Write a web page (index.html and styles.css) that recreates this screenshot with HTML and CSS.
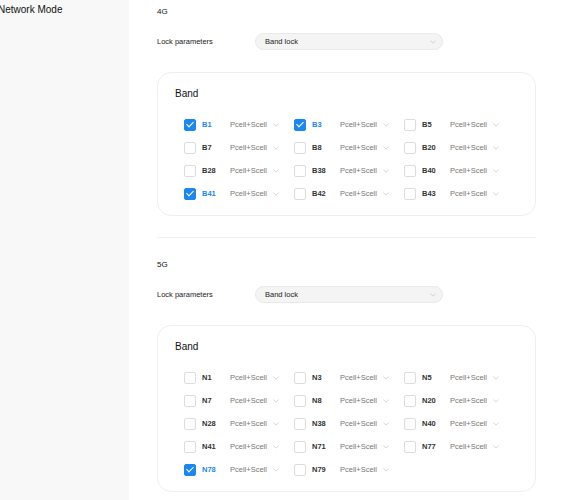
FILE: index.html
```html
<!DOCTYPE html>
<html lang="en">
<head>
  <meta charset="UTF-8" />
  <meta name="viewport" content="width=device-width, initial-scale=1.0"/>
  <title>Network Mode</title>
  <link rel="stylesheet" href="styles.css">
</head>
<body>
  <aside class="sidebar">
    <div class="side-title">Network Mode</div>
  </aside>

  <main class="content">
    <section class="mode">
      <div class="mode-title">4G</div>
      <div class="param-row">
        <span class="param-label">Lock parameters</span>
        <div class="select">Band lock <svg class="chev" viewBox="0 0 8 5"><path d="M0.5 0.5 L4 4 L7.5 0.5"/></svg></div>
      </div>
      <div class="band-card">
        <div class="band-title">Band</div>
        <div class="band-grid">
          <div class="band on"><span class="box"></span><b>B1</b><span class="cell">Pcell+Scell</span><svg class="chev" viewBox="0 0 8 5"><path d="M0.5 0.5 L4 4 L7.5 0.5"/></svg></div>
          <div class="band on"><span class="box"></span><b>B3</b><span class="cell">Pcell+Scell</span><svg class="chev" viewBox="0 0 8 5"><path d="M0.5 0.5 L4 4 L7.5 0.5"/></svg></div>
          <div class="band"><span class="box"></span><b>B5</b><span class="cell">Pcell+Scell</span><svg class="chev" viewBox="0 0 8 5"><path d="M0.5 0.5 L4 4 L7.5 0.5"/></svg></div>
          <div class="band"><span class="box"></span><b>B7</b><span class="cell">Pcell+Scell</span><svg class="chev" viewBox="0 0 8 5"><path d="M0.5 0.5 L4 4 L7.5 0.5"/></svg></div>
          <div class="band"><span class="box"></span><b>B8</b><span class="cell">Pcell+Scell</span><svg class="chev" viewBox="0 0 8 5"><path d="M0.5 0.5 L4 4 L7.5 0.5"/></svg></div>
          <div class="band"><span class="box"></span><b>B20</b><span class="cell">Pcell+Scell</span><svg class="chev" viewBox="0 0 8 5"><path d="M0.5 0.5 L4 4 L7.5 0.5"/></svg></div>
          <div class="band"><span class="box"></span><b>B28</b><span class="cell">Pcell+Scell</span><svg class="chev" viewBox="0 0 8 5"><path d="M0.5 0.5 L4 4 L7.5 0.5"/></svg></div>
          <div class="band"><span class="box"></span><b>B38</b><span class="cell">Pcell+Scell</span><svg class="chev" viewBox="0 0 8 5"><path d="M0.5 0.5 L4 4 L7.5 0.5"/></svg></div>
          <div class="band"><span class="box"></span><b>B40</b><span class="cell">Pcell+Scell</span><svg class="chev" viewBox="0 0 8 5"><path d="M0.5 0.5 L4 4 L7.5 0.5"/></svg></div>
          <div class="band on"><span class="box"></span><b>B41</b><span class="cell">Pcell+Scell</span><svg class="chev" viewBox="0 0 8 5"><path d="M0.5 0.5 L4 4 L7.5 0.5"/></svg></div>
          <div class="band"><span class="box"></span><b>B42</b><span class="cell">Pcell+Scell</span><svg class="chev" viewBox="0 0 8 5"><path d="M0.5 0.5 L4 4 L7.5 0.5"/></svg></div>
          <div class="band"><span class="box"></span><b>B43</b><span class="cell">Pcell+Scell</span><svg class="chev" viewBox="0 0 8 5"><path d="M0.5 0.5 L4 4 L7.5 0.5"/></svg></div>
        </div>
      </div>
    </section>

    <hr class="divider">

    <section class="mode">
      <div class="mode-title">5G</div>
      <div class="param-row">
        <span class="param-label">Lock parameters</span>
        <div class="select">Band lock <svg class="chev" viewBox="0 0 8 5"><path d="M0.5 0.5 L4 4 L7.5 0.5"/></svg></div>
      </div>
      <div class="band-card">
        <div class="band-title">Band</div>
        <div class="band-grid">
          <div class="band"><span class="box"></span><b>N1</b><span class="cell">Pcell+Scell</span><svg class="chev" viewBox="0 0 8 5"><path d="M0.5 0.5 L4 4 L7.5 0.5"/></svg></div>
          <div class="band"><span class="box"></span><b>N3</b><span class="cell">Pcell+Scell</span><svg class="chev" viewBox="0 0 8 5"><path d="M0.5 0.5 L4 4 L7.5 0.5"/></svg></div>
          <div class="band"><span class="box"></span><b>N5</b><span class="cell">Pcell+Scell</span><svg class="chev" viewBox="0 0 8 5"><path d="M0.5 0.5 L4 4 L7.5 0.5"/></svg></div>
          <div class="band"><span class="box"></span><b>N7</b><span class="cell">Pcell+Scell</span><svg class="chev" viewBox="0 0 8 5"><path d="M0.5 0.5 L4 4 L7.5 0.5"/></svg></div>
          <div class="band"><span class="box"></span><b>N8</b><span class="cell">Pcell+Scell</span><svg class="chev" viewBox="0 0 8 5"><path d="M0.5 0.5 L4 4 L7.5 0.5"/></svg></div>
          <div class="band"><span class="box"></span><b>N20</b><span class="cell">Pcell+Scell</span><svg class="chev" viewBox="0 0 8 5"><path d="M0.5 0.5 L4 4 L7.5 0.5"/></svg></div>
          <div class="band"><span class="box"></span><b>N28</b><span class="cell">Pcell+Scell</span><svg class="chev" viewBox="0 0 8 5"><path d="M0.5 0.5 L4 4 L7.5 0.5"/></svg></div>
          <div class="band"><span class="box"></span><b>N38</b><span class="cell">Pcell+Scell</span><svg class="chev" viewBox="0 0 8 5"><path d="M0.5 0.5 L4 4 L7.5 0.5"/></svg></div>
          <div class="band"><span class="box"></span><b>N40</b><span class="cell">Pcell+Scell</span><svg class="chev" viewBox="0 0 8 5"><path d="M0.5 0.5 L4 4 L7.5 0.5"/></svg></div>
          <div class="band"><span class="box"></span><b>N41</b><span class="cell">Pcell+Scell</span><svg class="chev" viewBox="0 0 8 5"><path d="M0.5 0.5 L4 4 L7.5 0.5"/></svg></div>
          <div class="band"><span class="box"></span><b>N71</b><span class="cell">Pcell+Scell</span><svg class="chev" viewBox="0 0 8 5"><path d="M0.5 0.5 L4 4 L7.5 0.5"/></svg></div>
          <div class="band"><span class="box"></span><b>N77</b><span class="cell">Pcell+Scell</span><svg class="chev" viewBox="0 0 8 5"><path d="M0.5 0.5 L4 4 L7.5 0.5"/></svg></div>
          <div class="band on"><span class="box"></span><b>N78</b><span class="cell">Pcell+Scell</span><svg class="chev" viewBox="0 0 8 5"><path d="M0.5 0.5 L4 4 L7.5 0.5"/></svg></div>
          <div class="band"><span class="box"></span><b>N79</b><span class="cell">Pcell+Scell</span><svg class="chev" viewBox="0 0 8 5"><path d="M0.5 0.5 L4 4 L7.5 0.5"/></svg></div>
        </div>
      </div>
    </section>
  </main>
</body>
</html>
```

FILE: styles.css
```css
body {
  margin: 0;
  display: flex;
  min-height: 500px;
  font-family: 'Liberation Sans', Arial, sans-serif;
  color: #222;
  background: #fff;
  overflow: hidden;
}

.sidebar {
  width: 129px;
  flex: none;
  background-color: #f8f8f8;
}

.side-title {
  margin-left: -2px;
  font-size: 10px;
  line-height: 19px;
  color: #111;
}

.content {
  width: 379px;
  padding-left: 28px;
}

.mode-title {
  font-size: 8px;
  line-height: 24px;
  color: #111;
}

.param-row {
  display: flex;
  align-items: center;
  height: 17px;
  margin-top: 9px;
}

.param-label {
  width: 98px;
  font-size: 7.5px;
  color: #222;
}

.select {
  width: 171px;
  height: 15px;
  padding: 0 6px 0 9px;
  display: flex;
  align-items: center;
  justify-content: space-between;
  font-size: 7.5px;
  color: #222;
  background-color: #f4f4f4;
  border: 1px solid #e9e9e9;
  border-radius: 9px;
}

.chev {
  width: 6px;
  height: 4px;
  fill: none;
  stroke: #bbb;
  stroke-width: 0.8;
}

.band-card {
  margin-top: 22px;
  padding: 14px 0 10px 26px;
  border: 1px solid #efefef;
  border-radius: 14px;
}

.band-title {
  margin-left: -9px;
  font-size: 10px;
  line-height: 14px;
  color: #111;
}

.band-grid {
  margin-top: 12px;
  display: grid;
  grid-template-columns: 110px 110px 110px;
  grid-auto-rows: 23px;
}

.band {
  display: flex;
  align-items: center;
  font-size: 7.5px;
}

.box {
  width: 10px;
  height: 10px;
  border: 1px solid #ddd;
  border-radius: 2px;
  background: #fff;
  margin-right: 6px;
  position: relative;
}

.band b {
  width: 28px;
  color: #333;
}

.cell {
  color: #777;
  margin-right: 6px;
}

.band.on .box {
  background-color: #1b87f2;
  border-color: #1b87f2;
}

/* check mark drawn with two borders */
.band.on .box::after {
  content: '';
  position: absolute;
  left: 3px;
  top: 0px;
  width: 3px;
  height: 6px;
  border: solid #fff;
  border-width: 0 1px 1px 0;
  transform: rotate(45deg);
}

.band.on b {
  color: #1b87f2;
}

.divider {
  margin: 21px 0 0;
  border: none;
  border-top: 1px solid #f0f0f0;
}

.divider + .mode {
  margin-top: 15px;
}
```
